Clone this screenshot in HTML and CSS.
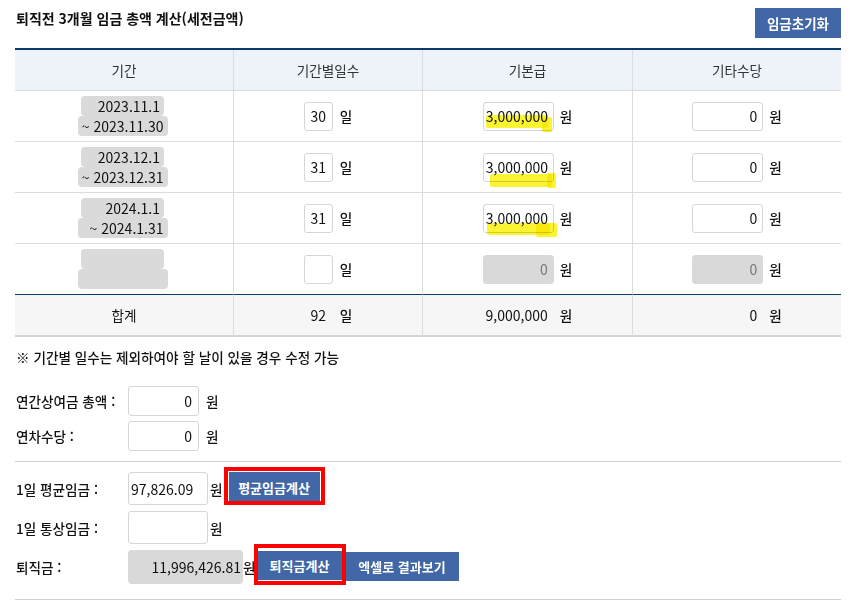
FILE: index.html
```html
<!DOCTYPE html>
<html lang="ko">
<head>
<meta charset="utf-8">
<title>퇴직금 계산</title>
<link rel="stylesheet" href="styles.css">
</head>
<body>
<div class="page">
  <div class="titlebar">
    <h2 class="title">퇴직전 3개월 임금 총액 계산(세전금액)</h2>
    <button class="btn btn-reset" type="button">임금초기화</button>
  </div>

  <div class="grid">
    <div class="cell head">기간</div>
    <div class="cell head">기간별일수</div>
    <div class="cell head">기본급</div>
    <div class="cell head">기타수당</div>

    <div class="cell"><div class="period"><input class="pd pd1" readonly value="2023.11.1"><input class="pd pd2" readonly value="~ 2023.11.30"></div></div>
    <div class="cell"><span class="fld"><input class="inp day" value="30"><span class="unit">일</span></span></div>
    <div class="cell"><span class="fld amt-fld"><span class="hlwrap"><input class="inp amt" value="3,000,000"><i class="hl h1a"></i><i class="hl h1b"></i></span><span class="unit">원</span></span></div>
    <div class="cell"><span class="fld amt-fld"><input class="inp amt" value="0"><span class="unit">원</span></span></div>

    <div class="cell"><div class="period"><input class="pd pd1" readonly value="2023.12.1"><input class="pd pd2" readonly value="~ 2023.12.31"></div></div>
    <div class="cell"><span class="fld"><input class="inp day" value="31"><span class="unit">일</span></span></div>
    <div class="cell"><span class="fld amt-fld"><span class="hlwrap"><input class="inp amt" value="3,000,000"><i class="hl h2a"></i><i class="hl h2b"></i></span><span class="unit">원</span></span></div>
    <div class="cell"><span class="fld amt-fld"><input class="inp amt" value="0"><span class="unit">원</span></span></div>

    <div class="cell"><div class="period"><input class="pd pd1" readonly value="2024.1.1"><input class="pd pd2" readonly value="~ 2024.1.31"></div></div>
    <div class="cell"><span class="fld"><input class="inp day" value="31"><span class="unit">일</span></span></div>
    <div class="cell"><span class="fld amt-fld"><span class="hlwrap"><input class="inp amt" value="3,000,000"><i class="hl h3a"></i><i class="hl h3b"></i></span><span class="unit">원</span></span></div>
    <div class="cell"><span class="fld amt-fld"><input class="inp amt" value="0"><span class="unit">원</span></span></div>

    <div class="cell last"><div class="period"><input class="pd pd1" readonly value=""><input class="pd pd2" readonly value=""></div></div>
    <div class="cell last"><span class="fld"><input class="inp day" value=""><span class="unit">일</span></span></div>
    <div class="cell last"><span class="fld amt-fld"><input class="inp amt off" readonly value="0"><span class="unit">원</span></span></div>
    <div class="cell last"><span class="fld amt-fld"><input class="inp amt off" readonly value="0"><span class="unit">원</span></span></div>

    <div class="cell sum">합계</div>
    <div class="cell sum"><span class="fld"><span class="val day">92</span><span class="unit">일</span></span></div>
    <div class="cell sum"><span class="fld amt-fld"><span class="val amt">9,000,000</span><span class="unit">원</span></span></div>
    <div class="cell sum"><span class="fld amt-fld"><span class="val amt">0</span><span class="unit">원</span></span></div>
  </div>

  <p class="note">※ 기간별 일수는 제외하여야 할 날이 있을 경우 수정 가능</p>

  <div class="form2">
    <div class="frow"><span class="lbl">연간상여금 총액 :</span><input class="inp sm" value="0"><span class="unit u7">원</span></div>
    <div class="frow"><span class="lbl">연차수당 :</span><input class="inp sm" value="0"><span class="unit u7">원</span></div>
  </div>

  <hr class="sep">

  <div class="form3">
    <div class="r ra">
      <span class="lbl">1일 평균임금 :</span>
      <input class="inp wide left" value="97,826.09">
      <span class="unit u2">원</span>
      <span class="mark mark-avg"><button class="btn btn-avg" type="button">평균임금계산</button></span>
    </div>
    <div class="r rb">
      <span class="lbl">1일 통상임금 :</span>
      <input class="inp wide left" value="">
      <span class="unit u2">원</span>
    </div>
    <div class="r rc">
      <span class="lbl">퇴직금 :</span>
      <input class="inp total" readonly value="11,996,426.81">
      <span class="unit">원</span>
      <span class="mark mark-ret"><button class="btn btn-ret" type="button">퇴직금계산</button></span>
      <button class="btn btn-xls" type="button">엑셀로 결과보기</button>
    </div>
  </div>

  <hr class="sep bottom">
</div>
</body>
</html>
```

FILE: styles.css
```css
* { box-sizing: border-box; }
html, body { margin: 0; background: #fff; }
body {
  font-family: "Noto Sans CJK KR", "Noto Sans", sans-serif;
  font-size: 13.6px;
  font-weight: 500;
  color: #111;
}
.page { width: 849px; padding: 8px 8px 0 15px; }

.titlebar { display: flex; justify-content: space-between; align-items: flex-start; height: 30px; }
.title { margin: 0 0 0 1px; font-size: 14px; font-weight: 700; line-height: 20px; color: #111; }

.btn {
  border: 0; border-radius: 0; padding: 0;
  background: #4167a7; color: #fff;
  font-family: inherit; font-weight: 700; font-size: 13px;
  cursor: pointer;
}
.btn-reset { width: 86px; height: 30px; font-size: 13.5px; }

.grid {
  margin-top: 10px;
  border-top: 2px solid #0c3a6b;
  display: grid;
  grid-template-columns: 218px 189px 210px 209px;
}
.cell {
  display: flex; align-items: center; justify-content: center;
  height: 51px;
  border-bottom: 1px solid #dcdcdc;
}
.cell:not(:nth-child(4n+1)) { border-left: 1px solid #dcdcdc; }
.head { height: 41px; background: #eef3fa; color: #333; font-weight: 400; }
.last { border-bottom-color: #0c3a6b; }
.sum { height: 42px; background: #f6f6f6; border-bottom: 2px solid #d4d4d4; font-weight: 400; }

.inp {
  border: 1px solid #d6d6d6; border-radius: 3px; background: #fff;
  font-family: inherit; font-size: 14px; font-weight: 400; color: #111;
  outline: none; margin: 0;
}
.fld { display: inline-flex; align-items: center; gap: 7px; }
.amt-fld { gap: 6px; }
.unit { line-height: 20px; font-weight: 500; }
.day { width: 29px; height: 29px; text-align: center; padding: 0; }
.amt { width: 71px; height: 29px; text-align: right; padding: 0 5px 0 2px; }
.off { background: #d9d9d9; border-color: #d9d9d9; color: #777; }
.val { display: inline-block; font-size: 14px; font-weight: 400; line-height: 29px; color: #111; }
.val.amt { padding-right: 6px; }

.period { display: flex; flex-direction: column; align-items: center; margin-right: 3px; }
.pd {
  height: 20px; border: 0; border-radius: 4px; background: #dadada;
  text-align: right; padding: 0 4px 0 1px; margin: 0;
  font-family: inherit; font-size: 14px; font-weight: 400; color: #111; outline: none;
}
.pd1 { width: 83px; }
.pd2 { width: 90px; }

.hlwrap { position: relative; display: inline-flex; }
.hl {
  position: absolute; background: #fbf31b; mix-blend-mode: multiply;
  border-radius: 2px; pointer-events: none; opacity: 0.9;
}
.h1a { left: 3px; top: 13px; width: 62px; height: 13px; }
.h1b { left: 59px; top: 15px; width: 10px; height: 15px; }
.h2a { left: 7px; top: 21px; width: 62px; height: 13px; }
.h2b { left: 64px; top: 20px; width: 9px; height: 15px; }
.h3a { left: 4px; top: 19px; width: 63px; height: 12px; }
.h3b { left: 53px; top: 19px; width: 21px; height: 14px; }

.note { margin: 10px 0 0 1px; line-height: 20px; }

.form2 { margin-top: 19px; }
.frow { display: flex; align-items: center; height: 30px; }
.frow + .frow { margin-top: 5px; }
.lbl { width: 113px; padding-left: 1px; flex: none; }
.sm { width: 71px; height: 30px; text-align: right; padding: 0 6px; }
.u7 { margin-left: 7px; }
.u2 { margin-left: 2px; }

.sep { border: 0; border-top: 1px solid #cfcfcf; margin: 10px 0 0; }
.sep.bottom { margin-top: 15px; }

.r { display: flex; align-items: center; }
.ra { height: 33px; margin-top: 10px; }
.rb { height: 33px; margin-top: 6px; }
.rc { height: 34px; margin-top: 6px; }
.wide { width: 80px; height: 33px; }
.left { text-align: left; padding: 0 2px; }
.total {
  width: 115px; height: 34px; border: 0; border-radius: 4px;
  background: #d9d9d9; text-align: right; padding: 0 2px;
  margin-top: 0;
}

.mark { position: relative; display: inline-flex; align-self: flex-start; }
.mark::after {
  content: ""; position: absolute; border: 4px solid #f00; pointer-events: none;
}
.mark-avg { margin-left: 6px; }
.mark-avg::after { top: -5px; left: -5px; right: -5px; bottom: -3px; }
.btn-avg { width: 91px; height: 30px; }
.mark-ret { margin-left: 2px; margin-top: 1px; }
.mark-ret::after { top: -7px; left: -4px; right: -4px; bottom: -5px; }
.btn-ret { width: 84px; height: 29px; }
.btn-xls { width: 113px; height: 29px; margin-left: 4px; align-self: flex-start; margin-top: 2px; }
```
